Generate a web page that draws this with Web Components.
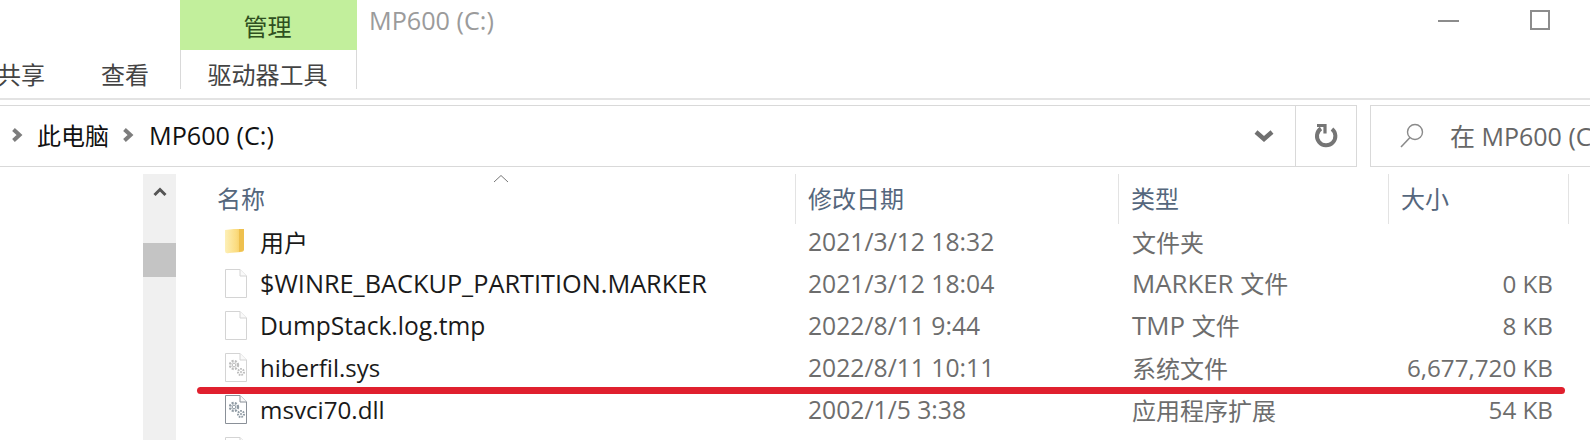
<!DOCTYPE html>
<html>
<head>
<meta charset="utf-8">
<title>MP600 (C:)</title>
<style>
  html, body { margin: 0; height: 100%; background: #fff; overflow: hidden; }
  body { font-family: "Open Sans", "Noto Sans CJK SC", sans-serif; }
</style>
</head>
<body>
<explorer-window>
  <ribbon-bar title-text="MP600 (C:)"></ribbon-bar>
  <address-bar></address-bar>
  <file-list>
    <file-row icon="folder" name="用户" date="2021/3/12 18:32" type="文件夹"></file-row>
    <file-row icon="file" name="$WINRE_BACKUP_PARTITION.MARKER" date="2021/3/12 18:04" type="MARKER 文件" size="0 KB" style="--name-size: 25.3px"></file-row>
    <file-row icon="file" name="DumpStack.log.tmp" date="2022/8/11 9:44" type="TMP 文件" size="8 KB" style="--name-size: 24.6px"></file-row>
    <file-row icon="sys" name="hiberfil.sys" date="2022/8/11 10:11" type="系统文件" size="6,677,720 KB"></file-row>
    <file-row icon="dll" name="msvci70.dll" date="2002/1/5 3:38" type="应用程序扩展" size="54 KB" style="--name-size: 24.2px"></file-row>
    <file-row icon="file"></file-row>
  </file-list>
</explorer-window>

<script>
const FONT = '"Open Sans", "Noto Sans CJK SC", sans-serif';

class ExplorerWindow extends HTMLElement {
  constructor() {
    super();
    this.attachShadow({mode: 'open'}).innerHTML = `
    <style>
      :host {
        display: block;
        position: relative;
        width: 1590px;
        height: 440px;
        overflow: hidden;
        background: #fff;
        font-family: ${FONT};
      }
      .marker {
        position: absolute;
        left: 197px;
        top: 387px;
        width: 1368px;
        height: 7px;
        border-radius: 4px;
        background: #e0202e;
      }
    </style>
    <slot></slot>
    <div class="marker"></div>
    `;
  }
}
customElements.define('explorer-window', ExplorerWindow);

class RibbonBar extends HTMLElement {
  connectedCallback() {
    const shadowDOM = this.shadowRoot || this.attachShadow({mode: 'open'});
    shadowDOM.innerHTML = `
    <style>
      :host {
        display: flex;
        height: 100px;
        box-sizing: border-box;
        border-bottom: 2px solid #e3e3e3;
        color: #444;
        font-size: 24px;
      }
      .tabs {
        display: flex;
        gap: 56px;
        width: 183px;
        margin-left: -3px;
        padding-top: 50px;
        line-height: 50px;
        white-space: nowrap;
      }
      .context {
        width: 177px;
        height: 89px;
        flex: none;
        text-align: center;
      }
      .context-head {
        height: 50px;
        line-height: 53px;
        padding-right: 2px;
        box-sizing: border-box;
        background: #c2ef9c;
        color: #2f4f20;
      }
      .context-tab {
        height: 39px;
        line-height: 50px;
        padding-right: 2px;
        box-sizing: border-box;
        border: solid #d9d9d9;
        border-width: 0 1px;
      }
      .title {
        flex: 1;
        padding: 3px 0 0 12px;
        line-height: 34px;
        font-size: 25.2px;
        color: #9b9b9b;
      }
      .controls {
        display: flex;
        align-items: flex-start;
        gap: 71px;
        padding: 10px 40px 0 0;
      }
      .min { width: 21px; height: 2px; margin-top: 10px; background: #8c8c8c; }
      .max { width: 20px; height: 20px; box-sizing: border-box; border: 2px solid #8c8c8c; }
    </style>
    <div class="tabs"><span>共享</span><span>查看</span></div>
    <div class="context">
      <div class="context-head">管理</div>
      <div class="context-tab">驱动器工具</div>
    </div>
    <div class="title">${this.getAttribute('title-text')}</div>
    <div class="controls"><div class="min"></div><div class="max"></div></div>
    `;
  }
}
customElements.define('ribbon-bar', RibbonBar);

class AddressBar extends HTMLElement {
  constructor() {
    super();
    const crumbArrow = `<svg width="14" height="18" viewBox="0 0 14 18"><path d="M3.5 3.5 L9.5 9 L3.5 14.5" fill="none" stroke="#7d7d7d" stroke-width="4"/></svg>`;
    this.attachShadow({mode: 'open'}).innerHTML = `
    <style>
      :host {
        display: flex;
        gap: 13px;
        height: 62px;
        margin-top: 5px;
        font-size: 24px;
      }
      .path {
        flex: none;
        width: 1359px;
        margin-left: -2px;
        box-sizing: border-box;
        display: flex;
        align-items: center;
        border: 1px solid #d9d9d9;
        color: #111;
      }
      .crumbs { flex: 1; display: flex; align-items: center; padding: 0 0 3px 11px; white-space: nowrap; }
      .crumbs svg { flex: none; }
      .crumbs span { margin: 0 12px 0 13px; }
      .crumbs .drive { font-size: 25.2px; margin-left: 14px; }
      .drop { width: 62px; display: flex; justify-content: center; }
      .refresh {
        width: 61px;
        height: 100%;
        box-sizing: border-box;
        border-left: 1px solid #d9d9d9;
        display: flex;
        align-items: center;
        justify-content: center;
      }
      .search {
        flex: 1;
        display: flex;
        align-items: center;
        box-sizing: border-box;
        border: solid #d9d9d9;
        border-width: 1px 0 1px 1px;
        padding: 0 0 3px 28px;
        gap: 25px;
        color: #666;
        white-space: nowrap;
        overflow: hidden;
      }
      .search svg { flex: none; }
      .search span { font-size: 25px; }
    </style>
    <div class="path">
      <div class="crumbs">
        ${crumbArrow}
        <span>此电脑</span>
        ${crumbArrow}
        <span class="drive">MP600 (C:)</span>
      </div>
      <div class="drop"><svg width="20" height="14" viewBox="0 0 20 14"><path d="M2 3 L10 10 L18 3" fill="none" stroke="#707070" stroke-width="4.4"/></svg></div>
      <div class="refresh"><svg width="24" height="26" viewBox="0 0 24 26"><path d="M7 5.5 A9.2 9.2 0 1 0 18 6" fill="none" stroke="#757575" stroke-width="4"/><path d="M3 2.5 L11 2.5 L11 10.5" fill="none" stroke="#757575" stroke-width="3.2"/></svg></div>
    </div>
    <div class="search">
      <svg width="26" height="26" viewBox="0 0 26 26"><circle cx="16" cy="10" r="7.5" fill="none" stroke="#8a8a8a" stroke-width="1.4"/><path d="M11 15.5 L2 25" stroke="#8a8a8a" stroke-width="1.6"/></svg>
      <span>在 MP600 (C:)</span>
    </div>
    `;
  }
}
customElements.define('address-bar', AddressBar);

class FileList extends HTMLElement {
  constructor() {
    super();
    this.attachShadow({mode: 'open'}).innerHTML = `
    <style>
      :host { display: flex; height: 273px; padding-left: 143px; }
      .scroll {
        flex: none;
        width: 33px;
        margin-top: 7px;
        background: #f0f0f0;
        display: flex;
        flex-direction: column;
        align-items: center;
      }
      .up { height: 69px; box-sizing: border-box; padding-top: 13px; }
      .up svg { display: block; }
      .thumb { width: 100%; height: 34px; background: #c4c4c4; }
      .main { flex: 1; min-width: 0; }
      .head {
        display: grid;
        grid-template-columns: 620px 323px 270px 180px;
        height: 46px;
        margin-top: 7px;
        font-size: 24px;
        color: #55677d;
        position: relative;
      }
      .head div {
        border-right: 1px solid #e3e3e3;
        padding-left: 12px;
        line-height: 50px;
        height: 50px;
      }
      .head div:first-child { padding-left: 41px; }
      .caret { position: absolute; left: 317px; top: 0; }
    </style>
    <div class="scroll">
      <div class="up"><svg width="14" height="10" viewBox="0 0 14 10"><path d="M1.5 8 L7 2.5 L12.5 8" fill="none" stroke="#555" stroke-width="3"/></svg></div>
      <div class="thumb"></div>
    </div>
    <div class="main">
      <div class="head">
        <div>名称</div><div>修改日期</div><div>类型</div><div>大小</div>
        <svg class="caret" width="16" height="10" viewBox="0 0 16 10"><path d="M1 8 L8 1.5 L15 8" fill="none" stroke="#777" stroke-width="1"/></svg>
      </div>
      <slot></slot>
    </div>
    `;
  }
}
customElements.define('file-list', FileList);

const ICONS = {
  folder: `<svg width="21" height="28" viewBox="0 0 21 28">
    <defs><linearGradient id="f" x1="0" x2="1" y1="0" y2="0"><stop offset="0" stop-color="#fdf0b8"/><stop offset=".6" stop-color="#fbdc80"/><stop offset="1" stop-color="#f0c452"/></linearGradient></defs>
    <path d="M0 3 L9 2 L17 2 Q19 2 19 4 L19 22 Q19 25 16 25 L4 26 Q0 27 0 24 Z" fill="url(#f)"/>
    <path d="M14 2 L19 2 L19 23 L14 25 Z" fill="#eec04e"/>
  </svg>`,
  file: `<svg width="22" height="29" viewBox="0 0 22 29">
    <path d="M.5 .5 H15 L21.5 7 V28.5 H.5 Z" fill="#fff" stroke="#d4d4d4"/>
    <path d="M15 .5 V7 H21.5" fill="#fafafa" stroke="#d4d4d4"/>
  </svg>`,
  gears(color, edge) {
    return `<svg width="22" height="29" viewBox="0 0 22 29">
      <path d="M.5 .5 H15 L21.5 7 V28.5 H.5 Z" fill="#fff" stroke="${edge}"/>
      <path d="M15 .5 V7 H21.5" fill="#fafafa" stroke="${edge}"/>
      <circle cx="9" cy="12" r="4" fill="none" stroke="${color}" stroke-width="2.4" stroke-dasharray="2 1.2"/>
      <circle cx="9" cy="12" r="1.8" fill="none" stroke="${color}" stroke-width="1"/>
      <circle cx="16" cy="19" r="3" fill="none" stroke="${color}" stroke-width="2" stroke-dasharray="1.6 1"/>
      <circle cx="16" cy="19" r="1" fill="${color}"/>
    </svg>`;
  }
};

// latin runs look narrow next to the CJK at the same size, so they get their own size
const sizeLatin = text => text.replace(/[A-Z]+ /g, m => `<span class="latin">${m}</span>`);

class FileRow extends HTMLElement {
  connectedCallback() {
    const shadowDOM = this.shadowRoot || this.attachShadow({mode: 'open'});
    const iconName = this.getAttribute('icon');
    let icon = ICONS[iconName];
    if (iconName === 'sys') icon = ICONS.gears('#bdbdbd', '#d4d4d4');
    if (iconName === 'dll') icon = ICONS.gears('#8f9aa3', '#8a9098');

    shadowDOM.innerHTML = `
    <style>
      :host {
        display: grid;
        grid-template-columns: 35px 548px 324px 1fr auto;
        align-items: center;
        height: 42px;
        padding: 0 37px 0 49px;
        font-size: 24px;
        color: #6d6d6d;
        white-space: nowrap;
      }
      .icon { display: flex; }
      .name { color: #1a1a1a; font-size: var(--name-size, 24px); }
      .date { font-size: 24.7px; }
      .latin { font-size: 25.8px; }
      .size { font-size: 24.2px; }
    </style>
    <div class="icon">${icon}</div>
    <div class="name">${this.getAttribute('name') || ''}</div>
    <div class="date">${this.getAttribute('date') || ''}</div>
    <div>${sizeLatin(this.getAttribute('type') || '')}</div>
    <div class="size">${this.getAttribute('size') || ''}</div>
    `;
  }
}
customElements.define('file-row', FileRow);
</script>
</body>
</html>
